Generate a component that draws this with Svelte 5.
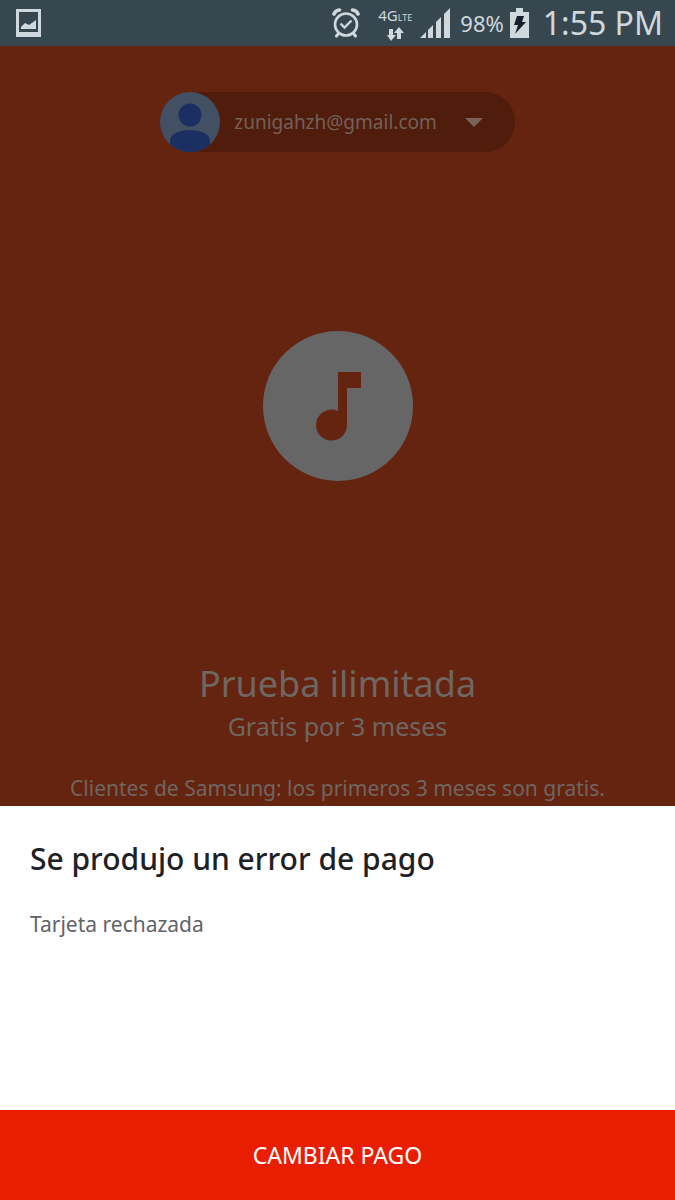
<script>
  let email = 'zunigahzh@gmail.com';
</script>

<div class="screen">
  <header class="status">
    <svg class="shot" width="26" height="28" viewBox="0 0 26 28" aria-hidden="true">
      <path fill="currentColor" fill-rule="evenodd" d="M0 0h25v28H0zM3 3v20h19V3z" />
      <path fill="currentColor" d="M5 20v-2l4-4 4 2 7-5v9z" />
    </svg>
    <div class="indicators">
      <svg class="alarm" width="28" height="30" viewBox="0 0 28 30" aria-hidden="true">
        <g fill="none" stroke="currentColor">
          <circle cx="14" cy="16.500" r="11" stroke-width="2.600" />
          <path d="M8.500 15.500l4 4 7-7" stroke-width="2.400" />
          <path d="M2 6C3 3.500 5 2.200 7.500 2M26 6C25 3.500 23 2.200 20.500 2" stroke-width="3.600" stroke-linecap="round" />
          <path d="M6.500 25.500L4.500 28M21.500 25.500l2 2.500" stroke-width="3" stroke-linecap="round" />
        </g>
      </svg>
      <div class="network">
        <span class="gen">4G<small>LTE</small></span>
        <svg width="17" height="14" viewBox="0 0 17 14" aria-hidden="true">
          <path fill="currentColor" d="M2 2h4v6h3l-5 6-4-6h2zM10 12V6H7l5-6 5 6h-3v6z" />
        </svg>
      </div>
      <svg class="signal" width="30" height="30" viewBox="0 0 30 30" aria-hidden="true">
        <path fill="currentColor" d="M0 30l6-6v6zM8 22l5-5v13H8zM16 14l5-5v21h-5zM24 6l6-6v30h-6z" />
      </svg>
      <span class="percent">98%</span>
      <svg class="battery" width="19" height="30" viewBox="0 0 19 30" aria-hidden="true">
        <path fill="currentColor" d="M0 4h6V0h7v4h6v26H0z" />
        <path fill="#17202a" d="M7 8h7l-2 6h4L5 26l3-9H4z" />
      </svg>
      <time>1:55 PM</time>
    </div>
  </header>

  <main class="offer">
    <button class="account" type="button">
      <svg class="avatar" width="60" height="60" viewBox="0 0 60 60" aria-hidden="true">
        <defs><clipPath id="face"><circle cx="30" cy="30" r="30" /></clipPath></defs>
        <g clip-path="url(#face)">
          <path fill="#435064" d="M0 0h60v60H0z" />
          <circle cx="30" cy="23" r="11.500" fill="#1b2f63" />
          <path fill="#1b2f63" d="M10 60V49c0-7 9-11 20-11s20 4 20 11v11z" />
        </g>
      </svg>
      <span>{email}</span>
      <svg class="caret" width="18" height="9" viewBox="0 0 18 9" aria-hidden="true">
        <path fill="currentColor" d="M0 0h18L9 9z" />
      </svg>
    </button>

    <svg class="logo" width="150" height="150" viewBox="0 0 150 150" aria-hidden="true">
      <circle cx="75" cy="75" r="75" fill="#666" />
      <path fill="#65240f" d="M75 41h23v16H84v36.500A15.500 15.500 0 1 1 75 80z" />
    </svg>

    <div class="copy">
      <h1>Prueba ilimitada</h1>
      <p class="price">Gratis por 3 meses</p>
      <p class="terms">Clientes de Samsung: los primeros 3 meses son gratis.</p>
    </div>
  </main>

  <section class="sheet" aria-labelledby="problem">
    <h2 id="problem">Se produjo un error de pago</h2>
    <p>Tarjeta rechazada</p>
  </section>
  <button class="change" type="button">CAMBIAR PAGO</button>
</div>

<style>
  :global(body) {
    margin: 0;
  }
  .screen {
    display: flex;
    flex-direction: column;
    min-height: 100vh;
    background: #65240f;
    font-family: "Noto Sans", sans-serif;
  }
  h1, h2, p {
    margin: 0;
    font-weight: 400;
  }
  button {
    border: 0;
    font-family: inherit;
  }
  svg {
    display: block;
    flex: none;
  }
  .status {
    display: flex;
    align-items: center;
    justify-content: space-between;
    height: 46px;
    padding: 0 12px 0 16px;
    background: #37474f;
    color: #cfd8dc;
  }
  .indicators {
    display: flex;
    align-items: center;
  }
  .network {
    display: flex;
    flex-direction: column;
    align-items: center;
    margin: 0 8px 0 18px;
  }
  .gen {
    font-size: 15px;
    line-height: 18px;
  }
  small {
    font-size: 9px;
  }
  .percent {
    margin: 0 6px 0 10px;
    font-size: 22px;
  }
  time {
    margin-left: 14px;
    font-size: 32px;
    line-height: 46px;
  }
  .offer {
    flex: 1;
    display: flex;
    flex-direction: column;
    align-items: center;
    justify-content: space-between;
    padding: 46px 0 2px;
    color: #6f6661;
    text-align: center;
  }
  .account {
    display: flex;
    align-items: center;
    height: 60px;
    padding: 0 32px 0 0;
    border-radius: 30px;
    background: #501c0b;
    color: #74605a;
    font-size: 19px;
  }
  .account span {
    margin: 0 28px 0 14px;
  }
  .caret {
    color: #7a6258;
  }
  h1 {
    font-size: 36px;
    line-height: 48px;
  }
  .price {
    font-size: 25px;
    line-height: 36px;
  }
  .terms {
    margin-top: 28px;
    font-size: 21px;
    line-height: 32px;
  }
  .sheet {
    box-sizing: border-box;
    min-height: 304px;
    padding: 32px 30px;
    background: #fff;
    color: #202124;
  }
  h2 {
    font-size: 30px;
    font-weight: 500;
    line-height: 42px;
  }
  .sheet p {
    margin-top: 28px;
    color: #5f6368;
    font-size: 21px;
    line-height: 32px;
  }
  .change {
    height: 90px;
    background: #e91e00;
    color: #fff;
    font-size: 23px;
  }
</style>
